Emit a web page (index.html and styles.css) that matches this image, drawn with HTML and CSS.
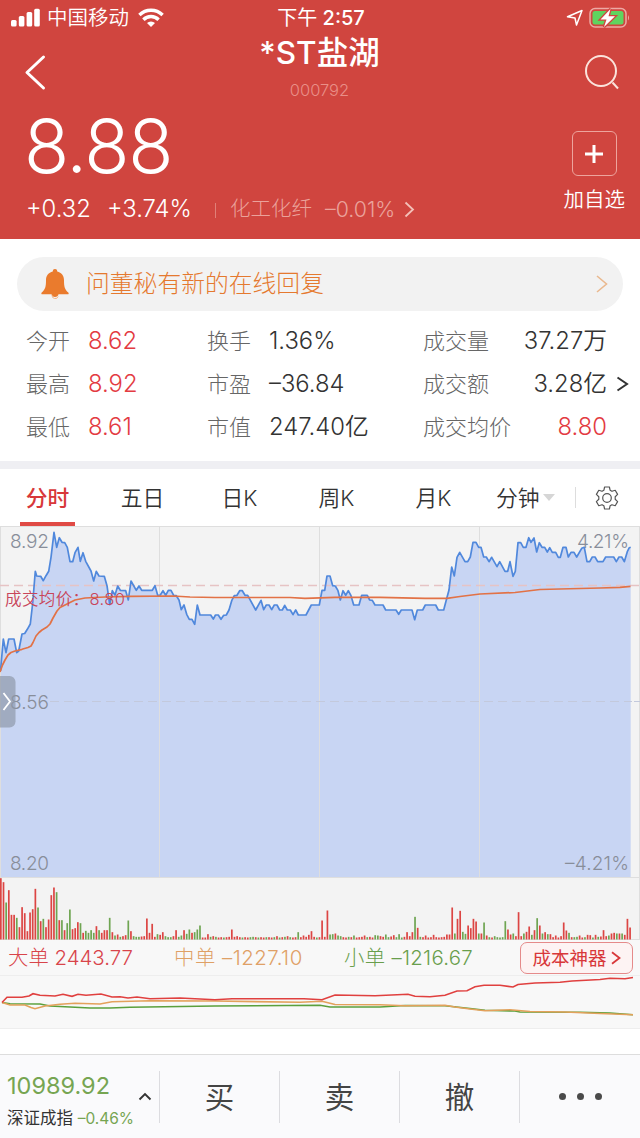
FILE: index.html
```
<!DOCTYPE html>
<html lang="zh-CN">
<head>
    <meta charset="UTF-8">
    <meta name="viewport" content="width=device-width, initial-scale=1.0">
    <title>*ST盐湖 000792</title>
    <link rel="stylesheet" href="styles.css">
</head>
<body>
    <header class="header">
        <div class="status-bar">
            <div class="carrier">
                <svg width="30" height="20" viewBox="0 0 30 20" fill="#fff">
                    <rect x="0" y="12" width="5.6" height="6.5" rx="1.5"/>
                    <rect x="7.8" y="8" width="5.6" height="10.5" rx="1.5"/>
                    <rect x="15.6" y="4" width="5.6" height="14.5" rx="1.5"/>
                    <rect x="23.2" y="0.8" width="5.6" height="17.7" rx="1.5"/>
                </svg>
                <span class="carrier-name">中国移动</span>
                <svg width="26" height="20" viewBox="0 0 26 20" fill="none" stroke="#fff" stroke-width="3.4">
                    <path d="M1.4 7a16.6 16.6 0 0 1 23.2 0"/>
                    <path d="M5.4 11.700a10.700 10.700 0 0 1 15.200 0"/>
                    <path d="M9 15a5.8 5.8 0 0 1 8 0l-4 4z" fill="#fff" stroke="none"/>
                </svg>
            </div>
            <div class="time"><span>下午</span> 2:57</div>
            <div class="battery">
                <svg width="18" height="18" viewBox="0 0 18 18" fill="none" stroke="#fff" stroke-width="1.5" stroke-linejoin="round">
                    <path d="M1.5 7.8L16 1.5 10.5 16 9 9z"/>
                </svg>
                <svg width="42" height="22" viewBox="0 0 42 22">
                    <rect x="1" y="1.5" width="36" height="18.500" rx="5" fill="none" stroke="#eda9a4" stroke-width="1.5"/>
                    <rect x="3.500" y="4" width="31" height="13.500" rx="2.500" fill="#5fd35f"/>
                    <path d="M39 8v5.500q2-2.700 0-5.500" fill="#eda9a4"/>
                    <path d="M21.500 2L11.500 12.500h6L15 20 26 9.300h-6.500z" fill="#fff" stroke="#d0453f" stroke-width="2.600" paint-order="stroke"/>
                </svg>
            </div>
        </div>
        <div class="nav">
            <svg class="back" width="24" height="38" viewBox="0 0 24 38" fill="none" stroke="#fff" stroke-width="3" stroke-linecap="round" stroke-linejoin="round">
                <path d="M20.500 4L4 19.500 20.500 35"/>
            </svg>
            <div class="title">
                <h1>*ST盐湖</h1>
                <p>000792</p>
            </div>
            <svg class="search" width="36" height="36" viewBox="0 0 36 36" fill="none" stroke="#fbe3dc" stroke-width="2">
                <circle cx="17" cy="17" r="15"/>
                <path d="M28.500 28.500L34 34.500"/>
            </svg>
        </div>
        <div class="quote">
            <div>
                <div class="price">8.88</div>
                <div class="change">
                    <span class="diff">+0.32</span>
                    <span class="percent">+3.74%</span>
                    <span class="sector">化工化纤</span>
                    <span class="sector-change">–0.01%</span>
                    <svg width="11" height="17" viewBox="0 0 11 17" fill="none" stroke="#f3c0b8" stroke-width="1.800"><path d="M1.500 1.500L9 8.500 1.500 15.500"/></svg>
                </div>
            </div>
            <div class="add">
                <div class="add-box">
                    <svg width="18" height="18" viewBox="0 0 18 18" stroke="#fff" stroke-width="3"><path d="M9 0v18M0 9h18"/></svg>
                </div>
                <span>加自选</span>
            </div>
        </div>
    </header>

    <section class="summary">
        <div class="notice">
            <svg width="28" height="30" viewBox="0 0 28 30" fill="#ea7b2d">
                <path d="M14 0a2.200 2.200 0 0 1 2.200 2.400C20.500 3.400 23 6.700 23 11c0 7 .8 9.500 4.300 12.500 .7 .8 .4 1.800-.8 1.800h-9a3.600 3.600 0 0 1-7 0h-9c-1.200 0-1.500-1-.8-1.800C4.200 20.500 5 18 5 11c0-4.300 2.500-7.600 6.800-8.600A2.200 2.200 0 0 1 14 0z"/>
                <path d="M11 26.300a3.200 3.200 0 0 0 6.200 1.200" fill="none" stroke="#f4b487" stroke-width="1"/>
            </svg>
            <span>问董秘有新的在线回复</span>
            <svg width="12" height="20" viewBox="0 0 12 20" fill="none" stroke="#eab98f" stroke-width="1.600"><path d="M1 2L10.500 10 1 18"/></svg>
        </div>
        <div class="stats">
            <span class="label">今开</span><span class="value up">8.62</span>
            <span class="label">换手</span><span class="value">1.36%</span>
            <span class="label">成交量</span><span class="value right">37.27万</span><span></span>

            <span class="label">最高</span><span class="value up">8.92</span>
            <span class="label">市盈</span><span class="value">–36.84</span>
            <span class="label">成交额</span><span class="value right">3.28亿</span>
            <svg width="13" height="18" viewBox="0 0 13 18" fill="none" stroke="#333" stroke-width="2"><path d="M1.500 2.500L11 9 1.500 15.500"/></svg>

            <span class="label">最低</span><span class="value up">8.61</span>
            <span class="label">市值</span><span class="value">247.40亿</span>
            <span class="label">成交均价</span><span class="value right up">8.80</span><span></span>
        </div>
    </section>

    <nav class="tabs">
        <a class="tab active">分时</a>
        <a class="tab">五日</a>
        <a class="tab">日K</a>
        <a class="tab">周K</a>
        <a class="tab">月K</a>
        <a class="tab minute">分钟<i class="caret"></i></a>
        <a class="settings">
            <svg width="24" height="24" viewBox="0 0 24 24" fill="none" stroke="#555" stroke-width="1.200" stroke-linejoin="round">
                <path d="M9.600 1h4.800l.7 3.200 1.900 1.100 3.200-1 2.400 4.100-2.400 2.300v2.600l2.400 2.300-2.400 4.100-3.200-1-1.900 1.100-.7 3.200H9.600l-.7-3.200L7 18.700l-3.200 1-2.400-4.100 2.400-2.300v-2.600L1.400 8.400l2.400-4.100 3.200 1 1.900-1.100z"/>
                <circle cx="12" cy="12" r="4.300"/>
            </svg>
        </a>
    </nav>

    <svg class="chart" width="640" height="414" viewBox="0 526 640 414">
        <path id="priceArea" class="area"/>
        <g class="grid">
            <path d="M0 526.500H640M0 877.500H640M0 939.500H640"/>
            <path d="M0.500 526V877M159.500 526V877M319.500 526V877M479.500 526V877M639.500 526V940"/>
        </g>
        <path class="dash" d="M50 701.500H632M634 701.500H640"/>
        <path class="dash base" d="M0 585.500H640"/>
        <g class="axis">
            <text x="10" y="548" textLength="39">8.92</text>
            <text x="10" y="709" textLength="39">8.56</text>
            <text x="10" y="870" textLength="39">8.20</text>
            <text x="577" y="548" textLength="52">4.21%</text>
            <text x="565" y="870" textLength="64">–4.21%</text>
        </g>
        <polyline id="priceLine" class="price-line" points="0.5,671 3.300,639 6,652.700 8.700,639 14,639 16.700,652.700 18.700,651 22,634 24.700,633.500 27.300,629.300 30.300,624 32.700,603 35.300,571.300 36.700,576 40.700,576.300 43.300,580.700 46,575.700 48.700,571.300 51,557.300 54,532.300 56.700,547.300 59.300,537.700 62,542.300 64.700,542.700 67.300,547.300 70,561.700 72.700,561.700 75,552.700 78,547.300 80.300,561.300 83,552.700 85.700,561.300 91,571 93.700,581 96.300,571.300 99,576 104.300,576.300 107,585.700 109.700,604.700 112.300,590.700 115,595 117.700,586 120.300,590.300 125.700,590.700 128.300,600 131,581 136.300,590.300 139,586 141.700,590.300 152.300,590.300 155,585.700 157.700,595.300 160.300,595 163,590.700 165.700,595.300 168.300,590.300 171,590.300 173.700,595.300 176.300,595.700 179,600 181.300,609.700 184,605 186.700,614.300 189.300,619.300 192,619.300 194.700,624.300 197.300,605 200,615 210.700,615 213.300,619 215.500,615 218.300,615 221,619.300 223.700,615.300 226.300,615 229,610 231.700,600.700 234.300,595.700 237,595.300 239.700,590.700 242.300,590.700 245,595.300 247.700,595.300 255.700,610 261,600.300 263.700,609.700 266.300,605 269,605 271.700,609.700 274.300,605 277,605 279.700,610 282.300,610 284.700,605.300 287.300,610 290.300,610 293,614.700 295.700,610 298.300,615 306,615 311.300,605 319.300,605 322,590.300 324.700,590.300 327,576 330,576 332.700,585.700 335.300,586 338,590.700 340.300,600 343,590.700 345.700,595.300 348.300,590.700 351,595.700 353.700,605 359,605 361.700,595.300 367.300,595.300 369.700,600 372.300,600.300 375,605 383,605 385.700,610 396,610 398.700,614.300 401.300,610 412,610 414.700,619.700 417.300,610 422.700,610 425.300,605 435.700,605 438.300,610 443.700,610 446.300,600 449,590 451.700,567 454.300,576 457,557.300 459.700,552.300 465,561.700 467.700,561.700 470.300,557 473,542.300 476,542.300 478.700,547.300 481,547.300 483.700,557 486.300,557 489,561.700 491.700,557.300 497,566.700 499.700,561.700 505,571.300 507.700,571.300 510,561.700 513,576.300 515.300,571.300 518,542.700 520.700,542.700 523.300,547.300 526,547.300 528.700,537.700 531,542.300 534,538 536.700,552 539.300,542.700 542,547.300 544.700,547.300 547.300,552 549.700,547.700 552.300,552.300 555.700,552.300 558.300,557.300 560.300,557.300 563,547.300 566,547.300 568.300,557 571,552.300 574,552.300 576.700,557 581.700,548.300 584.300,547.300 587,561.700 589.700,561.700 592.300,557 595,557 597.700,561.700 603,561.700 605.700,557 613.700,557 616.300,561.700 619,557 621.700,557 624.300,561.700 627.300,551.700 629.300,547.700 630.700,547.300"/>
        <polyline class="avg-line" points="0,672 2.500,665 5,660 8,655 11,652.500 15,651 22,649.300 28,647.500 31,646 33,642.500 36,636 39,632.500 42,630 47,627 50,624 53,618 57,611 60,607.500 64,605.500 75,600 85,598 105,597 130,596.300 173,596 190,597 215,597.500 290,597.500 305,598.300 335,597.300 380,597.300 425,598.300 447,598.300 460,596.500 480,594 515,592.500 540,589.500 560,589 600,588 620,587.300 630.500,586.300"/>
        <text class="avg-label" x="5" y="605" textLength="120">成交均价：8.80</text>
        <g id="volume"></g>
        <rect x="-8" y="676" width="23.500" height="51.500" rx="6" fill="#8f98aa" fill-opacity=".7"/>
        <path d="M3.500 693L10 701.500 3.500 710" fill="none" stroke="#fff" stroke-width="1.800"/>
    </svg>

    <section class="flow">
        <div class="flow-legend">
            <span class="big">大单 2443.77</span>
            <span class="mid">中单 –1227.10</span>
            <span class="small">小单 –1216.67</span>
            <a class="cost">成本神器<svg width="10" height="16" viewBox="0 0 10 16" fill="none" stroke="#d8383a" stroke-width="1.800"><path d="M1 2.200L8.500 8 1 13.800"/></svg></a>
        </div>
        <svg class="flow-chart" width="640" height="53" viewBox="0 976 640 53">
            <polyline stroke="#5aa03c" points="2,1002.500 10,1003.700 40,1004 50,1006 60,1006.500 90,1008 110,1008 130,1007.300 215,1006 320,1005.300 330,1007 380,1007 405,1005.500 445,1005.700 470,1008.500 485,1010.300 515,1011 520,1012 580,1012.300 610,1013 633,1014.700"/>
            <polyline stroke="#e3a15b" points="2,1002.500 10,1005 25,1005 31,1007.500 35,1008.700 45,1006 60,1004.300 75,1003.300 100,1004 112,1001.700 150,1000.700 215,1001 300,1002.300 322,1001.300 335,1004.500 380,1004.700 405,1005.700 445,1005.300 455,1007 470,1009 485,1010.700 510,1009.700 530,1011.500 565,1012 600,1013.500 633,1014.700"/>
            <polyline stroke="#e0403f" points="2,1002.500 7,997.300 22,997.300 29,996 33,993.700 40,995.300 55,996 63,994.300 72,996.300 78,994.300 86,995.300 101,994 112,997 120,996.700 128,998 137,997 150,998.700 180,998 215,999.700 232,998.700 304,998.700 322,999.700 335,995 375,995.700 408,994.300 415,996.300 430,996.700 445,995.300 457,991 467,990.700 475,986.700 484,985.300 500,985.300 513,987 518,984.500 535,983 560,982.300 572,981 600,979.500 610,978.300 625,978.700 633,977.500"/>
        </svg>
    </section>

    <footer class="bottom-bar">
        <div class="index">
            <div class="index-text">
                <div class="index-value">10989.92</div>
                <div class="index-name">深证成指 <span>–0.46%</span></div>
            </div>
            <svg width="14" height="9" viewBox="0 0 14 9" fill="none" stroke="#333" stroke-width="1.900"><path d="M1.500 7.500L7 2 12.500 7.500"/></svg>
        </div>
        <a class="action">买</a>
        <a class="action">卖</a>
        <a class="action">撤</a>
        <a class="action more"><i></i><i></i><i></i></a>
    </footer>

    <script>
        const svgNS = 'http://www.w3.org/2000/svg';

        // fill under the price line
        const line = document.getElementById('priceLine').getAttribute('points');
        document.getElementById('priceArea').setAttribute('d', `M0 877L${line.split(' ').join('L')}L630.700 877Z`);

        // volume per minute, negative = down bar
        const volumes = [
            184, 172, -111, 148, 74, 74, -65, 37, 97, 79, 25, 81, 91, 152, -96, 55, -62, 37, 60, 133,
            156, -142, 58, -58, 28, -49, -90, 31, 34, 52, -49, 20, -26, -20, -28, -20, 40, -28, 20, 28,
            28, -65, 22, -12, 15, -8, 10, 13, -57, 25, -10, -8, -8, 9, 10, 63, 20, 47, 8, -16,
            14, 22, -10, -7, -7, 10, 28, -8, -12, 28, -17, -30, 20, -22, -30, -42, 6, 6, 16, -8,
            10, -8, 6, 7, -6, 7, 8, 30, 8, 10, 7, -6, 7, 6, -7, -8, 7, -6, 7, 6,
            -7, 7, 6, -7, 10, -6, 7, -8, 10, -7, 6, 7, -22, 7, 12, 8, 14, 25, 8, -6,
            7, 57, 8, 87, -15, -16, 18, -12, -10, 7, 6, -8, 7, -12, 6, 7, 8, 12, -7, 8,
            6, -13, -12, 10, 8, -15, -7, 9, 13, -7, -16, -6, 8, 22, 10, 22, -68, 35, -8, 7,
            12, 6, 7, 14, 7, 6, 7, 8, 15, 15, 96, -18, 62, 86, -23, -17, 42, 34, 62, 54,
            -18, 18, -51, 12, -7, 6, -10, -7, -6, -7, -55, 30, 15, -18, 10, 82, 10, -18, 23, 39,
            -14, 28, -64, 42, -18, 22, -16, 16, 7, 12, 6, 10, 51, 27, -20, 7, -7, -8, 12, 6,
            -7, 14, 13, -6, 14, -8, 9, 28, 10, -12, 18, 20, -18, 18, -18, 14, 62, 36
        ];
        const volume = document.getElementById('volume');
        volumes.forEach((v, i) => {
            const bar = document.createElementNS(svgNS, 'rect');
            const h = Math.abs(v) / 3;
            bar.setAttribute('x', i * 2.655);
            bar.setAttribute('y', 939.5 - h);
            bar.setAttribute('width', 1.7);
            bar.setAttribute('height', h);
            bar.setAttribute('fill', v < 0 ? '#6fa552' : '#dc4543');
            volume.appendChild(bar);
        });
    </script>
</body>
</html>
```
FILE: styles.css
```
* {
    box-sizing: border-box;
}
body {
    margin: 0;
    width: 640px;
    height: 1138px;
    display: flex;
    flex-direction: column;
    background: #fff;
    color: #333;
    font-family: Inter, "Noto Sans CJK SC", sans-serif;
    font-weight: 300;
    overflow: hidden;
}
h1, p {
    margin: 0;
}
svg {
    display: block;
    flex: none;
}
.header {
    height: 239px;
    background: #d0453f;
    color: #fff;
}
.status-bar {
    display: grid;
    grid-template-columns: 1fr auto 1fr;
    align-items: center;
    height: 35px;
    padding: 0 9px 0 11px;
}
.carrier {
    display: flex;
    align-items: center;
}
.carrier-name {
    margin: 0 9px 0 6px;
    font-size: 20.5px;
    font-weight: 350;
    line-height: 31px;
}
.time {
    font-size: 20px;
    font-weight: 500;
    line-height: 34px;
}
.time span {
    font-weight: 400;
}
.battery {
    display: flex;
    justify-content: flex-end;
    align-items: center;
    gap: 5px;
}
.nav {
    display: grid;
    grid-template-columns: 1fr auto 1fr;
    height: 69px;
    padding: 0 20px 0 23px;
}
.back {
    margin-top: 18px;
}
.search {
    margin-top: 19px;
    justify-self: end;
}
.title {
    margin-left: -4px;
    text-align: center;
}
.title h1 {
    font-size: 31.5px;
    font-weight: 500;
    line-height: 36px;
}
.title p {
    margin-top: 8px;
    font-size: 16.5px;
    line-height: 22px;
    color: #e98f88;
}
.quote {
    display: flex;
    justify-content: space-between;
    padding: 0 15px 0 26px;
}
.price {
    margin: 6px 0 0 -2px;
    font-size: 74px;
    line-height: 72px;
    letter-spacing: -1.3px;
}
.change {
    display: flex;
    align-items: center;
    margin-top: 10px;
    font-size: 23.8px;
    line-height: 34px;
}
.diff {
    width: 81px;
}
.percent {
    width: 108px;
}
.sector {
    padding-left: 15px;
    background: linear-gradient(#e08078, #e08078) 0 11px / 1px 15px no-repeat;
    font-size: 20.5px;
    color: #eba29b;
}
.sector-change {
    margin: 0 9px 0 13px;
    font-size: 21.3px;
    color: #eba29b;
}
.add {
    display: flex;
    flex-direction: column;
    align-items: center;
    padding-top: 27px;
    font-size: 20.5px;
    font-weight: 350;
    line-height: 30px;
}
.add-box {
    display: grid;
    place-items: center;
    width: 45px;
    height: 45px;
    margin-bottom: 9px;
    border: 1.5px solid #eda49d;
    border-radius: 6px;
}
.summary {
    height: 230px;
    padding-top: 18px;
    border-bottom: 8px solid #efeff3;
}
.notice {
    display: flex;
    align-items: center;
    height: 54px;
    margin: 0 17px;
    padding: 0 15px 0 24px;
    border-radius: 27px;
    background: #f2f2f2;
    color: #e5792f;
    font-size: 23.8px;
    line-height: 30px;
}
.notice span {
    flex: 1;
    margin-left: 17px;
}
.stats {
    display: grid;
    grid-template-columns: 62px 119px 62px 154px 90px 94px 16px;
    grid-auto-rows: 43px;
    align-items: center;
    padding: 8px 0 0 26px;
    font-size: 22px;
    line-height: 30px;
    white-space: nowrap;
}
.stats svg {
    margin-left: 9px;
}
.label {
    color: #666;
}
.value {
    font-size: 23.8px;
    font-weight: 350;
}
.right {
    text-align: right;
}
.up {
    color: #e33b42;
}
.tabs {
    display: flex;
    align-items: stretch;
    height: 57px;
    font-size: 21.8px;
    font-weight: 350;
    line-height: 58px;
    text-align: center;
}
.tab {
    width: 97px;
}
.tab.active {
    width: 55px;
    margin: 0 19px 0 20px;
    border-bottom: 4px solid #e04a45;
    color: #d8383a;
    font-weight: 500;
}
.tab.minute {
    display: flex;
    align-items: center;
    width: 93px;
    padding-left: 14px;
}
.caret {
    margin-left: 3px;
    border: 6px solid transparent;
    border-top: 7px solid #d6d6d6;
    border-bottom: 0;
}
.settings {
    display: flex;
    align-items: center;
    padding-left: 20px;
    background: linear-gradient(#ddd, #ddd) 0 18px / 1px 21px no-repeat;
}
.chart {
    background: #f3f3f3;
}
.area {
    fill: #c8d5f3;
}
.grid {
    stroke: #dedede;
    stroke-width: 1;
}
.dash {
    fill: none;
    stroke: #c3c9dc;
    stroke-dasharray: 9 5;
}
.dash.base {
    stroke: #e6c3c4;
    stroke-width: 1.4;
}
.price-line, .avg-line {
    fill: none;
    stroke: #5088dc;
    stroke-width: 1.7;
    stroke-linejoin: round;
}
.avg-line {
    stroke: #e27246;
}
.axis {
    font-size: 19px;
    fill: #888e9a;
}
.avg-label {
    font-size: 16.5px;
    font-weight: 350;
    fill: #c8455a;
}
.flow {
    height: 89px;
    background: #f8f8f8;
    border-bottom: 1px solid #eee;
}
.flow-legend {
    display: flex;
    align-items: center;
    height: 36px;
    padding: 0 7px 0 8px;
    font-size: 20.4px;
    line-height: 30px;
    border-bottom: 1px solid #eee;
    white-space: nowrap;
}
.big {
    width: 166px;
    color: #d8444a;
}
.mid {
    width: 170px;
    color: #dfa066;
    letter-spacing: 0.5px;
}
.small {
    color: #699e4c;
    letter-spacing: 0.3px;
}
.cost {
    display: flex;
    align-items: center;
    justify-content: center;
    gap: 4px;
    width: 113px;
    height: 32px;
    margin-left: auto;
    border: 1.5px solid #e58a8a;
    border-radius: 7px;
    background: #fdf3f3;
    color: #d8383a;
    font-size: 18.5px;
    font-weight: 400;
}
.flow-chart polyline {
    fill: none;
    stroke-width: 1.6;
}
.bottom-bar {
    display: grid;
    grid-template-columns: 159px 120px 120px 120px 1fr;
    align-items: center;
    height: 84px;
    margin-top: auto;
    border-top: 1px solid #ddd;
    background: #fafafc;
}
.index {
    display: flex;
    align-items: center;
    justify-content: space-between;
    padding: 0 7px;
}
.index-text {
    padding-top: 11px;
}
.index-value {
    font-size: 23.5px;
    font-weight: 400;
    line-height: 32px;
    color: #76a552;
}
.index-name {
    font-size: 16.5px;
    font-weight: 400;
    line-height: 32px;
    white-space: nowrap;
}
.index-name span {
    font-size: 15.5px;
    color: #76a552;
}
.action {
    height: 52px;
    border-left: 1px solid #dcdce0;
    color: #444;
    font-size: 29.5px;
    font-weight: 400;
    line-height: 53px;
    text-align: center;
}
.more {
    display: flex;
    align-items: center;
    justify-content: center;
    gap: 11px;
}
.more i {
    width: 7px;
    height: 7px;
    border-radius: 50%;
    background: #4a4a4a;
}
```
